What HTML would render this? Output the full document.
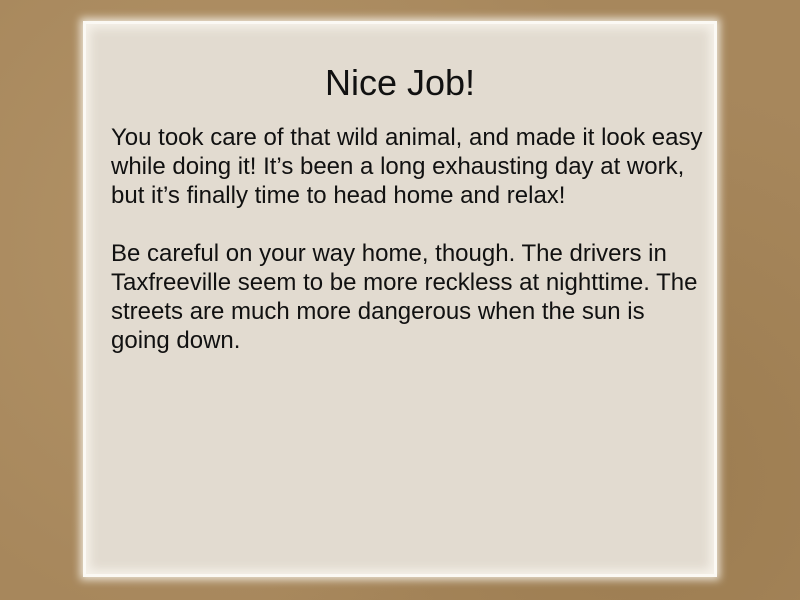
<!DOCTYPE html>
<html><head><style>
html,body{margin:0;padding:0}
body{width:800px;height:600px;background:#a7875c;position:relative;overflow:hidden;font-family:"Liberation Sans",Arial,sans-serif;
background-image:radial-gradient(circle at 30% 40%,#b39468 0,transparent 60%),radial-gradient(circle at 80% 80%,#9c7c50 0,transparent 50%);}
.panel{position:absolute;left:86px;top:24px;width:628px;height:550px;background:#e2dbd0;
box-shadow:0 0 0 3px #fbf9f4,0 0 8px 6px rgba(255,255,250,.75),inset 0 0 10px 4px #f6f2ea;}
h1{position:absolute;left:0;right:0;top:62px;margin:0;text-align:center;font-weight:normal;font-size:36px;color:#111;}
.t{position:absolute;left:111px;top:123px;width:660px;font-size:24px;line-height:29px;color:#111;margin:0;white-space:nowrap}
</style></head><body>
<div class="panel"></div>
<h1>Nice Job!</h1>
<p class="t">You took care of that wild animal, and made it look easy<br>while doing it! It’s been a long exhausting day at work,<br>but it’s finally time to head home and relax!<br><br>Be careful on your way home, though. The drivers in<br>Taxfreeville seem to be more reckless at nighttime. The<br>streets are much more dangerous when the sun is<br>going down.</p>
</body></html>
